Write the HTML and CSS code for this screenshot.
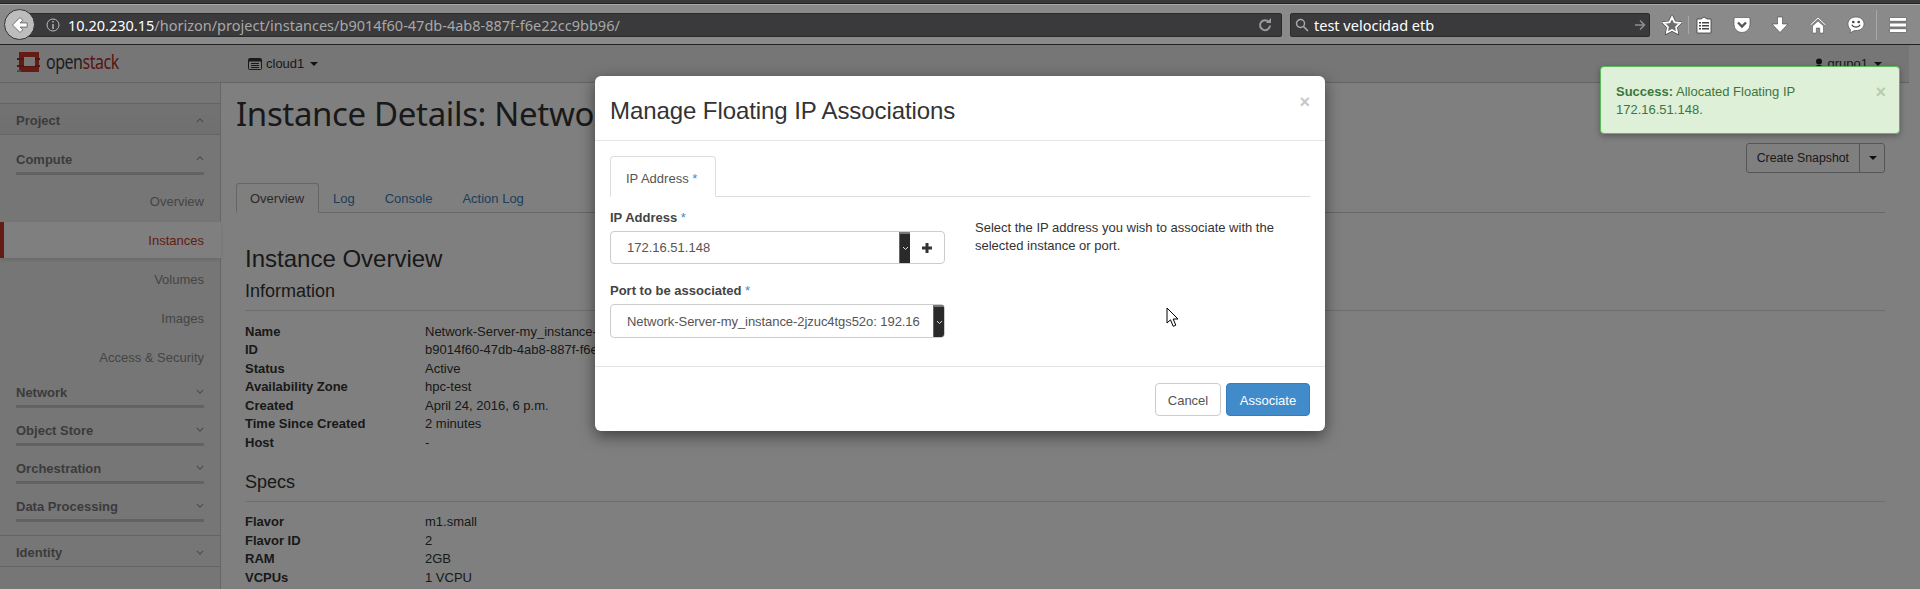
FILE: index.html
```html
<!DOCTYPE html>
<html lang="en">
<head>
<meta charset="utf-8">
<title>Instance Details</title>
<link rel="stylesheet" href="styles.css">
</head>
<body>
<div class="tabstrip"></div>
<div class="toolbar">
  <button class="back" aria-label="Back">
    <svg width="20" height="20" viewBox="0 0 20 20"><path d="M10 2.500 2.500 10l7.500 7.500 2.800-2.800-2.700-2.600h7.100V7.900h-7.100l2.700-2.600z" fill="#fff" stroke="#555" stroke-width=".8"/></svg>
  </button>
  <div class="urlbar">
    <svg class="info" width="14" height="14" viewBox="0 0 14 14"><circle cx="7" cy="7" r="6" fill="none" stroke="#bbb" stroke-width="1"/><path d="M6.300 3h1.400v1.500H6.300zM6.300 6h1.400v5H6.300z" fill="#bbb"/></svg>
    <span class="url"><span class="host">10.20.230.15</span>/horizon/project/instances/b9014f60-47db-4ab8-887f-f6e22cc9bb96/</span>
    <svg class="reload" width="14" height="14" viewBox="0 0 14 14"><path d="M11 4.200A5 5 0 1 0 12 7.500" fill="none" stroke="#9a9a9a" stroke-width="2"/><path d="M8 5h5V0z" fill="#9a9a9a"/></svg>
  </div>
  <div class="searchbar">
    <svg width="14" height="14" viewBox="0 0 14 14"><circle cx="5.500" cy="5.500" r="4" fill="none" stroke="#aaa" stroke-width="1.400"/><path d="m8.500 8.500 4.500 4.500" stroke="#aaa" stroke-width="1.600"/></svg>
    <span class="query">test velocidad etb</span>
    <svg class="go" width="12" height="12" viewBox="0 0 12 12"><path d="M1 6h9M6 1.500 10.500 6 6 10.500" fill="none" stroke="#8f8f8f" stroke-width="1.500"/></svg>
  </div>
  <div class="tools">
    <svg class="t-star" width="20" height="20" viewBox="0 0 20 20"><path d="m10 2 2.500 5.200 5.700.8-4.100 4 1 5.700-5.100-2.700-5.100 2.700 1-5.700-4.100-4 5.700-.8z" fill="none" stroke="#3a3a3a" stroke-width="3"/><path d="m10 2 2.500 5.200 5.700.8-4.100 4 1 5.700-5.100-2.700-5.100 2.700 1-5.700-4.100-4 5.700-.8z" fill="#6d6d6d" stroke="#fff" stroke-width="1.800"/></svg>
    <i class="sep"></i>
    <svg class="t-list" width="18" height="20" viewBox="0 0 18 20"><path d="M2 4h4l3-2 3 2h4v14H2z" fill="#fff" stroke="#3a3a3a" stroke-width=".8"/><path d="M4 7h2v1.600H4zM7 7h7v1.600H7zM4 10h2v1.600H4zM7 10h7v1.600H7zM4 13h2v1.600H4zM7 13h7v1.600H7z" fill="#444"/></svg>
    <svg class="t-pocket" width="18" height="18" viewBox="0 0 18 18"><path d="M2.500 1.500h13A1.500 1.500 0 0 1 17 3v5.500a8 8 0 0 1-16 0V3a1.500 1.500 0 0 1 1.500-1.500z" fill="#fff" stroke="#444" stroke-width=".6"/><path d="m5 6.500 4 4 4-4" fill="none" stroke="#555" stroke-width="2.400"/></svg>
    <svg class="t-down" width="18" height="18" viewBox="0 0 18 18"><path d="M6.500 1h5v7H17l-8 8.500L1 8h5.500z" fill="#fff" stroke="#444" stroke-width=".6"/></svg>
    <svg class="t-home" width="18" height="18" viewBox="0 0 18 18"><path d="M9 1 1 8.500l1 1L9 3l7 6.500 1-1z" fill="#fff" stroke="#444" stroke-width=".5"/><path d="M3.500 10 9 5l5.500 5v7h-3.800v-5H7.300v5H3.500z" fill="#fff" stroke="#444" stroke-width=".5"/></svg>
    <svg class="t-smile" width="18" height="18" viewBox="0 0 18 18"><path d="M9 1c4.400 0 8 2.800 8 6.800s-3.600 6.800-8 6.800c-.6 0-1.200 0-1.800-.1L3 17l.6-3.500C2 12.200 1 10.200 1 7.800 1 3.800 4.600 1 9 1z" fill="#fff" stroke="#444" stroke-width=".6"/><circle cx="6.300" cy="6" r="1.300" fill="#444"/><circle cx="11.700" cy="6" r="1.300" fill="#444"/><path d="M4.800 8.800c1.500 3 6.900 3 8.400 0" fill="none" stroke="#444" stroke-width="1.300"/></svg>
    <i class="sep tall"></i>
    <svg class="t-menu" width="18" height="16" viewBox="0 0 18 16"><rect x=".5" y=".5" width="17" height="3.800" rx="1" fill="#fff" stroke="#444" stroke-width=".6"/><rect x=".5" y="6.100" width="17" height="3.800" rx="1" fill="#fff" stroke="#444" stroke-width=".6"/><rect x=".5" y="11.700" width="17" height="3.800" rx="1" fill="#fff" stroke="#444" stroke-width=".6"/></svg>
  </div>
</div>

<div class="page">
  <div class="site">
    <header class="topbar">
      <div class="brand">
        <svg width="23" height="22" viewBox="0 0 23 22"><path d="M2 1h20v20H2z" fill="#c8372d"/><path d="M0 7h23v2H0zM0 14h23v2H0z" fill="#a82a22"/><path d="M7 6h11v9H7z" fill="#eee"/><path d="M0 19h4v2H0z" fill="#999"/></svg>
        <span class="brand-name">open<span class="brand-red">stack</span></span>
      </div>
      <div class="project-pick">
        <svg width="14" height="12" viewBox="0 0 14 12"><rect x=".5" y=".5" width="13" height="11" rx="1" fill="none" stroke="#333"/><path d="M1 1h12v2.500H1zM3 5h8v1H3zM3 7h8v1H3zM3 9h8v1H3z" fill="#333"/></svg>
        <span>cloud1</span><i class="caret"></i>
      </div>
      <div class="user-pick">
        <svg width="10" height="12" viewBox="0 0 10 12"><circle cx="5" cy="3.500" r="3" fill="#222"/><path d="M0 12c0-3.500 2-5 5-5s5 1.500 5 5z" fill="#222"/></svg>
        <span>grupo1</span><i class="caret"></i>
      </div>
    </header>
    <div class="main">
      <nav class="sidebar">
        <div class="nav-top">Project<svg class="chev" width="8" height="5" viewBox="0 0 10 6"><path d="m1 5 4-4 4 4" fill="none" stroke="#999" stroke-width="1.400"/></svg></div>
        <div class="nav-group">Compute<svg class="chev" width="8" height="5" viewBox="0 0 10 6"><path d="m1 5 4-4 4 4" fill="none" stroke="#999" stroke-width="1.400"/></svg></div>
        <ul class="nav-items">
          <li class="nav-item">Overview</li>
          <li class="nav-item active">Instances</li>
          <li class="nav-item">Volumes</li>
          <li class="nav-item">Images</li>
          <li class="nav-item">Access &amp; Security</li>
        </ul>
        <div class="nav-group">Network<svg class="chev" width="8" height="5" viewBox="0 0 10 6"><path d="m1 1 4 4 4-4" fill="none" stroke="#999" stroke-width="1.400"/></svg></div>
        <div class="nav-group">Object Store<svg class="chev" width="8" height="5" viewBox="0 0 10 6"><path d="m1 1 4 4 4-4" fill="none" stroke="#999" stroke-width="1.400"/></svg></div>
        <div class="nav-group">Orchestration<svg class="chev" width="8" height="5" viewBox="0 0 10 6"><path d="m1 1 4 4 4-4" fill="none" stroke="#999" stroke-width="1.400"/></svg></div>
        <div class="nav-group">Data Processing<svg class="chev" width="8" height="5" viewBox="0 0 10 6"><path d="m1 1 4 4 4-4" fill="none" stroke="#999" stroke-width="1.400"/></svg></div>
        <div class="nav-top identity">Identity<svg class="chev" width="8" height="5" viewBox="0 0 10 6"><path d="m1 1 4 4 4-4" fill="none" stroke="#999" stroke-width="1.400"/></svg></div>
      </nav>
      <main class="content">
        <h1 class="page-title">Instance Details: Network-Server-my_instance-2jzuc4tgs52o</h1>
        <div class="actions">
          <div class="split"><span class="split-main">Create Snapshot</span><span class="split-caret"><i class="caret"></i></span></div>
        </div>
        <ul class="tabs">
          <li class="tab current">Overview</li>
          <li class="tab">Log</li>
          <li class="tab">Console</li>
          <li class="tab">Action Log</li>
        </ul>
        <h3 class="overview">Instance Overview</h3>
        <h4 class="section">Information</h4>
        <dl class="facts">
          <dt>Name</dt><dd>Network-Server-my_instance-2jzuc4tgs52o</dd>
          <dt>ID</dt><dd>b9014f60-47db-4ab8-887f-f6e22cc9bb96</dd>
          <dt>Status</dt><dd>Active</dd>
          <dt>Availability Zone</dt><dd>hpc-test</dd>
          <dt>Created</dt><dd>April 24, 2016, 6 p.m.</dd>
          <dt>Time Since Created</dt><dd>2 minutes</dd>
          <dt>Host</dt><dd>-</dd>
        </dl>
        <h4 class="section specs">Specs</h4>
        <dl class="facts second-facts">
          <dt>Flavor</dt><dd>m1.small</dd>
          <dt>Flavor ID</dt><dd>2</dd>
          <dt>RAM</dt><dd>2GB</dd>
          <dt>VCPUs</dt><dd>1 VCPU</dd>
        </dl>
      </main>
    </div>
  </div>
  <div class="backdrop"></div>

  <section class="modal">
    <div class="modal-head">
      <h2>Manage Floating IP Associations</h2>
      <span class="modal-close">×</span>
    </div>
    <div class="modal-body">
      <div class="modal-tabs"><span class="modal-tab">IP Address <b class="req">*</b></span></div>
      <div class="modal-cols">
        <div class="fields">
          <label class="flabel">IP Address <b class="req">*</b></label>
          <div class="ctl">
            <span class="ctl-value">172.16.51.148</span>
            <span class="sel-arrow"><svg width="7" height="5" viewBox="0 0 7 5"><path d="m1 1 2.500 2.500L6 1" fill="none" stroke="#ddd"/></svg></span>
            <span class="ctl-add"><svg width="12" height="12" viewBox="0 0 12 12"><path d="M4.500 1h3v3.500H11v3H7.500V11h-3V7.500H1v-3h3.500z" fill="#333"/></svg></span>
          </div>
          <label class="flabel second">Port to be associated <b class="req">*</b></label>
          <div class="ctl tall">
            <span class="ctl-value clip">Network-Server-my_instance-2jzuc4tgs52o: 192.168.0.5</span>
            <span class="sel-arrow"><svg width="7" height="5" viewBox="0 0 7 5"><path d="m1 1 2.500 2.500L6 1" fill="none" stroke="#ddd"/></svg></span>
          </div>
        </div>
        <p class="help">Select the IP address you wish to associate with the selected instance or port.</p>
      </div>
    </div>
    <div class="modal-foot">
      <span class="btn">Cancel</span>
      <span class="btn primary">Associate</span>
    </div>
  </section>

  <div class="toast">
    <p><strong>Success:</strong> Allocated Floating IP 172.16.51.148.</p>
    <span class="toast-close">×</span>
  </div>

  <svg class="cursor" width="13" height="21" viewBox="0 0 13 21"><path d="M1 1v15l3.500-3.200 2.700 6.500 2.600-1.100L7.200 12H12z" fill="#fff" stroke="#000" stroke-width="1"/></svg>
</div>
</body>
</html>
```

FILE: styles.css
```css
* { box-sizing: border-box; }
html, body { margin: 0; height: 100%; overflow: hidden; }
body { background: #fff; font-family: "Liberation Sans", Arial, sans-serif; font-size: 13px; color: #333; display: flex; flex-direction: column; height: 589px; }
ul { list-style: none; margin: 0; padding: 0; }

.tabstrip { height: 4px; background: #3a3a3c; border-bottom: 1px solid #222; flex: none; }
.toolbar { height: 41px; flex: none; display: flex; align-items: center; background: #8a8a8a; border-top: 1px solid #aaa; border-bottom: 1px solid #222; position: relative; padding-right: 12px; }
.back { width: 31px; height: 31px; border-radius: 50%; background: #bdbdbd; border: 1px solid #333; margin-left: 4px; margin-right: -8px; padding: 0; position: relative; z-index: 1; display: flex; align-items: center; justify-content: center; flex: none; }
.urlbar { width: 1255px; height: 24px; background: #3a3a3c; border: 1px solid #2b2b2b; border-radius: 2px; display: flex; align-items: center; padding-left: 11px; flex: none; }
.info { margin-left: 7px; flex: none; }
.url { font-family: "Noto Sans", sans-serif; font-size: 14.5px; color: #a8a8a8; margin-left: 8px; white-space: nowrap; flex: 1; }
.host { color: #fff; }
.reload { margin-right: 9px; flex: none; }
.searchbar { width: 360px; height: 24px; margin-left: 8px; background: #3a3a3c; border: 1px solid #2b2b2b; border-radius: 2px; display: flex; align-items: center; padding: 0 3px 0 4px; flex: none; }
.query { font-family: "Noto Sans", sans-serif; font-size: 14.5px; color: #fff; margin-left: 5px; flex: 1; white-space: nowrap; }
.tools { display: flex; align-items: center; flex: none; height: 100%; margin-left: 12px; }
.tools svg { flex: none; display: block; }
.sep { width: 1px; height: 18px; background: #a8a8a8; margin: 0 6px 0 6px; flex: none; }
.sep.tall { height: 30px; margin: 0 12px 0 11px; }
.t-pocket { margin-left: 20px; }
.t-down { margin-left: 20px; }
.t-home { margin-left: 20px; }
.t-smile { margin-left: 20px; }

.page { position: relative; flex: 1; min-height: 0; overflow: hidden; }
.site { height: 100%; display: flex; flex-direction: column; margin-right: 11px; background: #fff; }
.topbar { height: 38px; flex: none; background: #ececec; border-bottom: 1px solid #c9c9c9; display: flex; align-items: center; padding-left: 17px; }
.brand { display: flex; align-items: center; width: 231px; height: 34px; margin-bottom: 4px; }
.brand svg { flex: none; }
.brand-name { font-family: "Noto Sans", sans-serif; font-size: 20px; color: #3c3c3c; margin-left: 6px; letter-spacing: -.6px; transform: scaleX(.8); transform-origin: left center; }
.brand-red { color: #b32c24; }
.project-pick { display: flex; align-items: center; gap: 4px; color: #333; font-size: 13px; }
.user-pick { display: flex; align-items: center; gap: 4px; margin-left: auto; margin-right: 27px; color: #333; font-size: 13px; }
.caret { display: inline-block; width: 0; height: 0; border-left: 4px solid transparent; border-right: 4px solid transparent; border-top: 4px solid #222; margin-left: 2px; }

.main { display: flex; flex: 1; min-height: 0; }
.sidebar { width: 221px; flex: none; background: #ededed; border-right: 1px solid #cfcfcf; padding-top: 20px; }
.chev { flex: none; }
.nav-top { height: 32px; display: flex; align-items: center; justify-content: space-between; padding: 2px 16px 0; font-weight: 700; color: #777; font-size: 13px; border-top: 1px solid #c9c9c9; border-bottom: 1px solid #c9c9c9; background: linear-gradient(#e6e6e6, #dfdfdf); }
.nav-top.identity { background: #ededed; margin-top: 13px; }
.nav-group { height: 32px; margin: 6.330px 16px 0; display: flex; align-items: flex-start; justify-content: space-between; font-weight: 700; color: #777; font-size: 13px; border-bottom: 3px solid #c4c4c4; padding-top: 9px; line-height: 15px; }
.nav-group .chev { margin-top: 4px; }
.nav-top + .nav-group { margin-top: 8px; }
.nav-items + .nav-group { margin-top: 0; }
.nav-items { padding-top: 6.500px; margin-bottom: -1px; }
.nav-item { height: 39px; display: flex; align-items: center; justify-content: flex-end; padding-right: 16px; color: #8a8a8a; font-size: 13px; }
.nav-item.active { height: 36px; margin: 1.500px -1px 1.500px 0; padding-right: 17px; background: #fff; color: #c4372c; border-left: 4px solid #c4372c; box-shadow: 0 2px 4px rgba(0,0,0,.12); position: relative; }

.content { flex: 1; min-width: 0; padding: 11px 24px 0 15px; background: #fff; }
.page-title { margin: 0; font-family: "Noto Sans", sans-serif; font-weight: 400; font-size: 33px; line-height: 40px; letter-spacing: -.35px; color: #333; white-space: nowrap; }
.actions { display: flex; justify-content: flex-end; margin-top: 9px; height: 30px; }
.split { display: flex; border: 1px solid #aaa; border-radius: 3px; background: #fff; height: 30px; }
.split-main { padding: 0 10px; line-height: 28px; font-size: 12.300px; color: #333; border-right: 1px solid #aaa; }
.split-caret { width: 24px; display: flex; align-items: center; justify-content: center; }
.tabs { display: flex; margin-top: 10px; height: 30px; border-bottom: 1px solid #ccc; }
.tab { padding: 0 15px; line-height: 31px; font-size: 13px; color: #3a7cb8; height: 30px; }
.tab.current { color: #555; background: #fff; border: 1px solid #ccc; border-bottom-color: #fff; border-radius: 3px 3px 0 0; padding: 0 13px; width: 83px; line-height: 29px; margin-right: -1px; }
.overview { margin: 32px 0 0 9px; font-weight: 400; font-size: 24px; line-height: 28px; color: #333; }
.section { margin: 8px 0 0 9px; font-weight: 400; font-size: 18px; line-height: 20px; color: #333; padding-bottom: 9px; border-bottom: 1px solid #ddd; }
.section.specs { margin-top: 20px; }
.facts { margin: 11.500px 0 0 9px; display: grid; grid-template-columns: 180px 1fr; line-height: 18.570px; font-size: 13px; }
.facts.second-facts { margin-top: 10.500px; }
.facts dt { font-weight: 700; }
.facts dd { margin: 0; }

.backdrop { position: absolute; inset: 0; background: rgba(0,0,0,.5); }

.modal { position: absolute; left: 595px; top: 31px; width: 730px; height: 355px; background: #fff; border-radius: 6px; box-shadow: 0 5px 15px rgba(0,0,0,.5); display: flex; flex-direction: column; }
.modal-head { height: 65px; flex: none; padding: 6px 15px 0; border-bottom: 1px solid #e5e5e5; display: flex; align-items: center; justify-content: space-between; }
.modal-head h2 { margin: 0; font-weight: 400; font-size: 24px; letter-spacing: -.08px; color: #333; }
.modal-close { font-size: 18px; font-weight: 700; color: #c8c8c8; align-self: flex-start; margin-top: 10px; line-height: 20px; }
.modal-body { flex: 1; padding: 15px 15px 0; }
.modal-tabs { height: 41px; border-bottom: 1px solid #ddd; }
.modal-tab { display: inline-block; height: 41px; width: 106px; padding: 0 15px; line-height: 43px; font-size: 13px; color: #555; background: #fff; border: 1px solid #ddd; border-bottom-color: #fff; border-radius: 4px 4px 0 0; }
.req { color: #428bca; font-weight: 400; }
.modal-cols { display: flex; }
.fields { width: 335px; flex: none; }
.flabel { display: block; font-weight: 700; font-size: 13px; color: #444; line-height: 18px; margin-top: 12px; margin-bottom: 4px; }
.flabel.second { margin-top: 18px; }
.flabel .req { font-weight: 400; }
.ctl { height: 33px; display: flex; align-items: center; border: 1px solid #ccc; border-radius: 4px; background: #fff; overflow: hidden; }
.ctl.tall { height: 34px; }
.ctl-value { padding-left: 16px; font-size: 13px; color: #555; flex: 1; white-space: nowrap; min-width: 0; }
.ctl-value.clip { overflow: hidden; margin-right: 13px; letter-spacing: -.06px; }
.sel-arrow { width: 11px; height: 100%; flex: none; background: #2a2a2a; display: flex; align-items: center; justify-content: center; border-left: 1px solid #666; border-top: 2px solid #777; }
.ctl-add { width: 34px; flex: none; height: 100%; display: flex; align-items: center; justify-content: center; }
.help { margin: 22px 0 0 30px; width: 320px; font-size: 13px; line-height: 18px; color: #333; }
.modal-foot { height: 65px; flex: none; border-top: 1px solid #e5e5e5; display: flex; justify-content: flex-end; align-items: flex-start; gap: 5px; padding: 16px 15px 0; }
.btn { height: 33px; padding: 0 10px; line-height: 33px; border: 1px solid #ccc; border-radius: 4px; font-size: 13px; color: #555; background: #fff; }
.btn.primary { background: #428bca; border-color: #357ebd; color: #fff; width: 84px; text-align: center; }
.btn:first-child { width: 66px; text-align: center; }

.toast { position: absolute; left: 1600px; top: 21px; width: 300px; height: 68px; background: #dff0d8; border: 1px solid #5cb85c; border-radius: 4px; box-shadow: 0 2px 6px rgba(0,0,0,.3); padding: 16px 44px 0 15px; color: #3c763d; font-size: 13px; line-height: 18px; }
.toast p { margin: 0; }
.toast-close { position: absolute; right: 13px; top: 15px; font-weight: 700; font-size: 18px; line-height: 20px; color: #b4cfb0; }
.cursor { position: absolute; left: 1166px; top: 262px; }
```
